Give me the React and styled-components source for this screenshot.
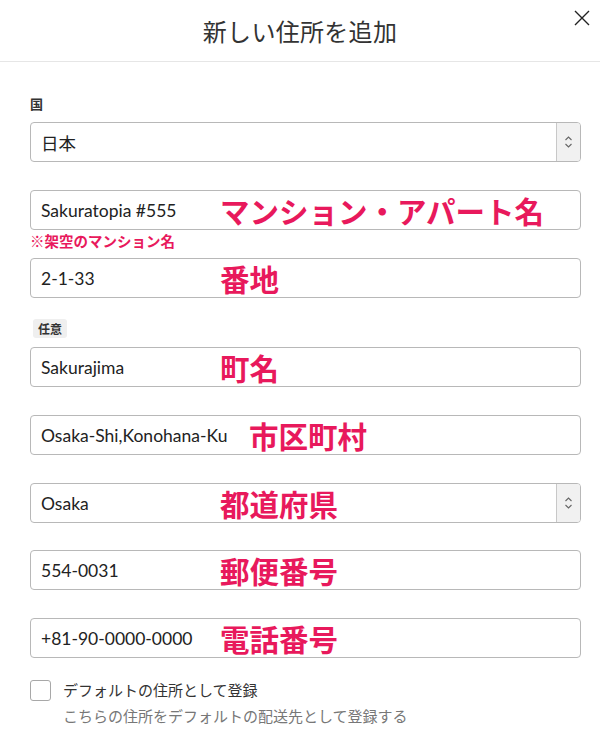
import React from 'react';
import styled, { createGlobalStyle } from 'styled-components';

const GlobalStyle = createGlobalStyle`
    body {
        margin: 0;
        background: #fff;
        font-family: Lato, "Noto Sans CJK JP", sans-serif;
        color: #222;
    }
`;

const Page = styled.div`
    width: 600px;
    height: 750px;
    background: #fff;
    overflow: hidden;
`;

const Header = styled.div`
    display: grid;
    grid-template-columns: 1fr auto 1fr;
    align-items: center;
    height: 61px;
    border-bottom: 1px solid #e6e6e6;
`;

const Title = styled.h1`
    grid-column: 2;
    margin: 0;
    font-family: "Noto Sans CJK JP", sans-serif;
    font-size: 24px;
    font-weight: 400;
    color: #333;
    letter-spacing: 0.3px;
`;

const CloseButton = styled.button`
    justify-self: end;
    align-self: start;
    margin: 9px 9px 0 0;
    width: 18px;
    height: 18px;
    padding: 0;
    border: none;
    background: none;
    display: flex;
    align-items: center;
    justify-content: center;
    cursor: pointer;
`;

const Body = styled.div`
    display: flex;
    flex-direction: column;
    padding: 34px 19px 0 30px;
`;

const Label = styled.div`
    font-family: "Noto Sans CJK JP", sans-serif;
    font-size: 13px;
    font-weight: 700;
    line-height: 16px;
    color: #333;
`;

const Badge = styled.span`
    align-self: flex-start;
    margin-top: ${p => p.$top}px;
    margin-left: 3px;
    padding: 0 5px;
    height: 19px;
    line-height: 19px;
    border-radius: 3px;
    background: #efefef;
    font-family: "Noto Sans CJK JP", sans-serif;
    font-size: 12px;
    font-weight: 700;
    color: #333;
`;

const Field = styled.div`
    position: relative;
    display: flex;
    height: 40px;
    margin-top: ${p => p.$top}px;
    border: 1px solid #b8b8b8;
    border-radius: 4px;
    box-sizing: border-box;
    background: #fff;
`;

const Value = styled.div`
    flex: 1;
    display: flex;
    align-items: center;
    padding-left: 10px;
    font-family: Lato, "Noto Sans CJK JP", sans-serif;
    font-size: 17.5px;
    color: #222;
`;

const Stepper = styled.div`
    width: 23px;
    display: flex;
    align-items: center;
    justify-content: center;
    background: #f1f1f1;
    border-left: 1px solid #c8c8c8;
    border-radius: 0 3px 3px 0;
`;

const Note = styled.div`
    position: absolute;
    left: ${p => p.$left}px;
    top: 50%;
    transform: translateY(-46%);
    font-family: "Noto Sans CJK JP", sans-serif;
    font-size: 29.5px;
    font-weight: 700;
    line-height: 1;
    color: #e8195c;
    white-space: nowrap;
`;

const Hint = styled.div`
    margin-top: 2px;
    font-family: "Noto Sans CJK JP", sans-serif;
    font-size: 14.5px;
    font-weight: 700;
    line-height: 18px;
    color: #e8195c;
`;

const CheckRow = styled.label`
    display: flex;
    gap: 12px;
    margin-top: 22px;
`;

const Box = styled.span`
    flex-shrink: 0;
    width: 21px;
    height: 21px;
    box-sizing: border-box;
    border: 1px solid #a8a8a8;
    border-radius: 3px;
    background: #fff;
`;

const CheckText = styled.div`
    display: flex;
    flex-direction: column;
    gap: 4px;
    margin-top: -1px;
    font-family: "Noto Sans CJK JP", sans-serif;
`;

const CheckTitle = styled.span`
    font-size: 15px;
    line-height: 22px;
    color: #333;
`;

const CheckSub = styled.span`
    font-size: 15px;
    line-height: 22px;
    color: #777;
`;

const Chevrons = () => (
    <svg width="9" height="14" viewBox="0 0 9 14" fill="none" stroke="#666" strokeWidth="1.1">
        <path d="M1.5 5 L4.5 2 L7.5 5" />
        <path d="M1.5 9 L4.5 12 L7.5 9" />
    </svg>
);

const CloseIcon = () => (
    <svg width="16" height="16" viewBox="0 0 16 16" stroke="#222" strokeWidth="1.4">
        <path d="M1 1 L15 15 M15 1 L1 15" />
    </svg>
);

const fields = [
    { value: 'Sakuratopia #555', note: 'マンション・アパート名', top: 28, hint: '※架空のマンション名' },
    { value: '2-1-33', note: '番地', top: 8 },
    { value: 'Sakurajima', note: '町名', top: 9, badge: '任意' },
    { value: 'Osaka-Shi,Konohana-Ku', note: '市区町村', top: 28, left: 218 },
    { value: 'Osaka', note: '都道府県', top: 28, select: true },
    { value: '554-0031', note: '郵便番号', top: 27 },
    { value: '+81-90-0000-0000', note: '電話番号', top: 28 },
];

function App() {
    return (
        <Page>
            <GlobalStyle />
            <Header>
                <Title>新しい住所を追加</Title>
                <CloseButton aria-label="閉じる"><CloseIcon /></CloseButton>
            </Header>
            <Body>
                <Label>国</Label>
                <Field $top={10}>
                    <Value>日本</Value>
                    <Stepper><Chevrons /></Stepper>
                </Field>
                {fields.map(f => (
                    <React.Fragment key={f.value}>
                        {f.badge && <Badge $top={21}>{f.badge}</Badge>}
                        <Field $top={f.top}>
                            <Value>{f.value}</Value>
                            {f.select && <Stepper><Chevrons /></Stepper>}
                            <Note $left={f.left ?? 189}>{f.note}</Note>
                        </Field>
                        {f.hint && <Hint>{f.hint}</Hint>}
                    </React.Fragment>
                ))}
                <CheckRow>
                    <Box />
                    <CheckText>
                        <CheckTitle>デフォルトの住所として登録</CheckTitle>
                        <CheckSub>こちらの住所をデフォルトの配送先として登録する</CheckSub>
                    </CheckText>
                </CheckRow>
            </Body>
        </Page>
    );
}

export default App;
